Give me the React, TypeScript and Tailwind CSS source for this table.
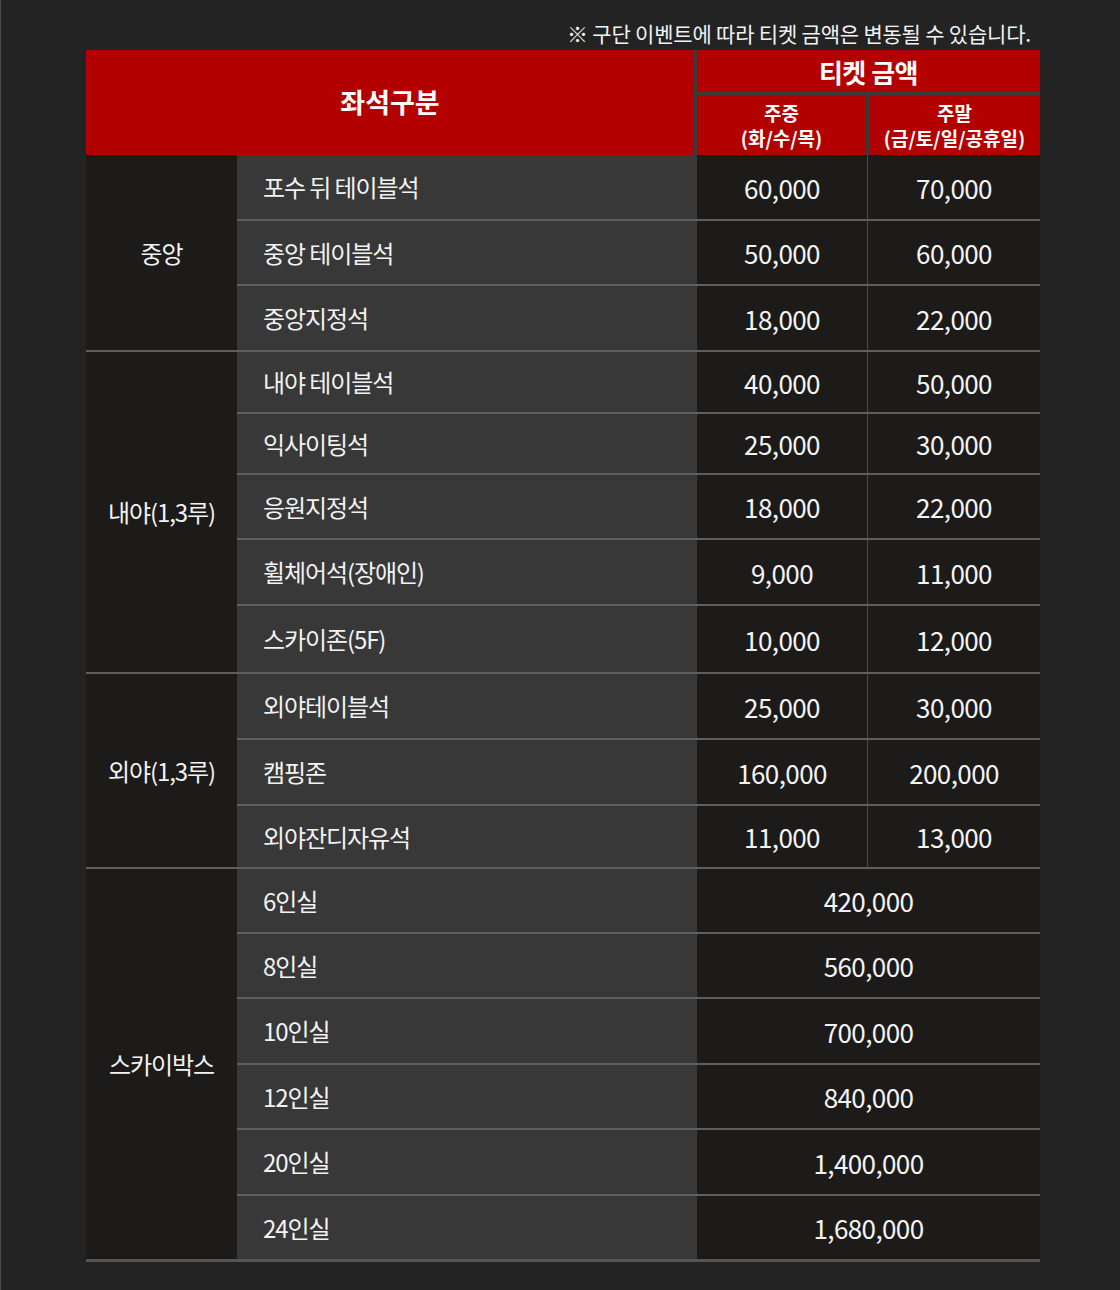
type Row = { name: string; h: number; weekday: string; weekend?: string };
type Group = { label: string; rows: Row[] };

const groups: Group[] = [
  {
    label: "중앙",
    rows: [
      { name: "포수 뒤 테이블석", h: 66, weekday: "60,000", weekend: "70,000" },
      { name: "중앙 테이블석", h: 65, weekday: "50,000", weekend: "60,000" },
      { name: "중앙지정석", h: 66, weekday: "18,000", weekend: "22,000" },
    ],
  },
  {
    label: "내야(1,3루)",
    rows: [
      { name: "내야 테이블석", h: 62, weekday: "40,000", weekend: "50,000" },
      { name: "익사이팅석", h: 61, weekday: "25,000", weekend: "30,000" },
      { name: "응원지정석", h: 65, weekday: "18,000", weekend: "22,000" },
      { name: "휠체어석(장애인)", h: 66, weekday: "9,000", weekend: "11,000" },
      { name: "스카이존(5F)", h: 68, weekday: "10,000", weekend: "12,000" },
    ],
  },
  {
    label: "외야(1,3루)",
    rows: [
      { name: "외야테이블석", h: 66, weekday: "25,000", weekend: "30,000" },
      { name: "캠핑존", h: 66, weekday: "160,000", weekend: "200,000" },
      { name: "외야잔디자유석", h: 63, weekday: "11,000", weekend: "13,000" },
    ],
  },
  {
    label: "스카이박스",
    rows: [
      { name: "6인실", h: 65, weekday: "420,000" },
      { name: "8인실", h: 65, weekday: "560,000" },
      { name: "10인실", h: 66, weekday: "700,000" },
      { name: "12인실", h: 65, weekday: "840,000" },
      { name: "20인실", h: 66, weekday: "1,400,000" },
      { name: "24인실", h: 64, weekday: "1,680,000" },
    ],
  },
];

function PriceRow({ row, last, cut }: { row: Row; last: boolean; cut: number }) {
  return (
    <div
      className={"flex " + (last ? "" : "border-b-2 border-[#5e5e5e]")}
      style={{ height: row.h - (last ? cut : 0) }}
    >
      <div className="w-[460px] bg-[#383838] flex items-center pl-[26px] text-[24px] tracking-[-1.1px] text-[#f2f2f2]">
        {row.name}
      </div>
      {row.weekend ? (
        <>
          <div className="w-[171px] bg-[#1c1b1a] flex items-center justify-center text-[26px] tracking-[-0.6px] text-[#f4f4f4] border-r border-[#4a4a4a]">
            {row.weekday}
          </div>
          <div className="w-[172px] bg-[#1c1b1a] flex items-center justify-center text-[26px] tracking-[-0.6px] text-[#f4f4f4]">
            {row.weekend}
          </div>
        </>
      ) : (
        <div className="w-[343px] bg-[#1c1b1a] flex items-center justify-center text-[26px] tracking-[-0.6px] text-[#f4f4f4]">
          {row.weekday}
        </div>
      )}
    </div>
  );
}

export default function App() {
  return (
    <div
      className="min-h-[1290px] w-[1120px] bg-[#232323] border-l border-[#4a4a4a] pt-[18px]"
      style={{ fontFamily: '"Noto Sans CJK KR", "Noto Sans", sans-serif' }}
    >
      <div className="w-[954px] ml-[85px]">
        <p className="text-right pr-[9px] text-[21px] leading-[30px] text-[#f2f2f2] tracking-[-0.2px] mb-[2px]">
          ※ 구단 이벤트에 따라 티켓 금액은 변동될 수 있습니다.
        </p>

        {/* header */}
        <div className="flex h-[105px] bg-[#3a3a3a]">
          <div className="w-[608px] bg-[#b30000] flex items-center justify-center text-[27px] font-bold text-white">
            좌석구분
          </div>
          <div className="ml-[3px] w-[343px] flex flex-col">
            <div className="h-[42px] bg-[#b30000] flex items-center justify-center text-[26px] font-bold tracking-[-0.5px] text-white">
              티켓 금액
            </div>
            <div className="mt-[3px] flex-1 flex">
              <div className="w-[169px] bg-[#b30000] flex flex-col items-center justify-center text-[19px] leading-[25px] font-bold text-white">
                <span>주중</span>
                <span>(화/수/목)</span>
              </div>
              <div className="ml-[3px] flex-1 bg-[#b30000] flex flex-col items-center justify-center text-[19px] leading-[25px] font-bold text-white">
                <span>주말</span>
                <span>(금/토/일/공휴일)</span>
              </div>
            </div>
          </div>
        </div>

        {/* body */}
        {groups.map((g, gi) => {
          const final = gi === groups.length - 1;
          return (
            <div
              key={g.label}
              className={
                "flex " +
                (final
                  ? "border-b-[3px] border-[#555555]"
                  : "border-b-2 border-[#5e5e5e]")
              }
            >
              <div className="w-[151px] bg-[#1c1b1a] flex items-center justify-center text-[24px] tracking-[-1.1px] text-[#f2f2f2]">
                {g.label}
              </div>
              <div className="flex flex-col">
                {g.rows.map((r, ri) => (
                  <PriceRow
                    key={r.name}
                    row={r}
                    last={ri === g.rows.length - 1}
                    cut={final ? 1 : 2}
                  />
                ))}
              </div>
            </div>
          );
        })}
      </div>
    </div>
  );
}
